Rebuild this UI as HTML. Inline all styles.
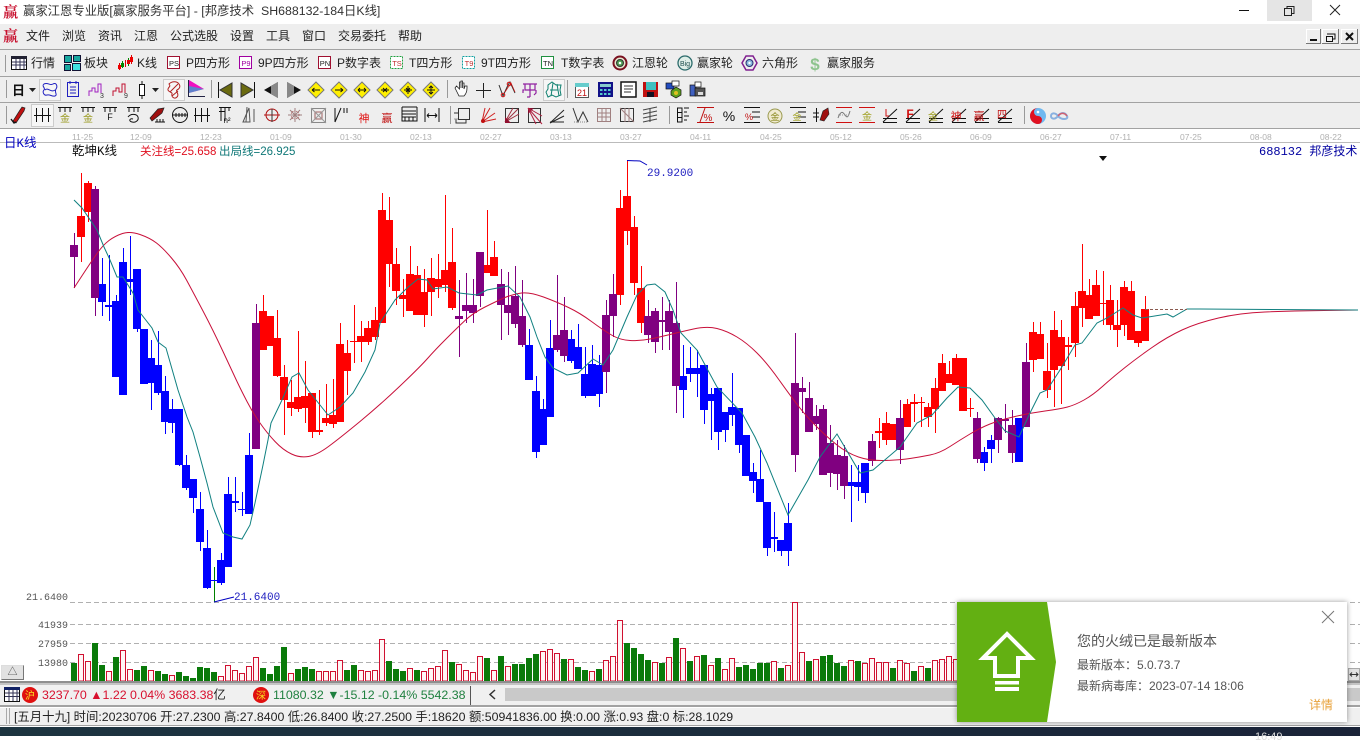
<!DOCTYPE html>
<html lang="zh"><head><meta charset="utf-8"><title>赢家江恩专业版</title>
<style>
html,body{margin:0;padding:0;background:#fff}
body{width:1360px;height:736px;position:relative;overflow:hidden;font:12px "Liberation Sans","Noto Sans CJK SC",sans-serif;color:#222}
.a{position:absolute;white-space:nowrap;line-height:14px}
.band{position:absolute;left:0;width:1360px;background:#eee}
.ln{position:absolute;left:0;width:1360px;height:1px;background:#a2a2a2}
svg{position:absolute;left:0;top:0}
svg text{font-family:"Liberation Sans","Noto Sans CJK SC",sans-serif}
svg text.m{font-family:"Liberation Mono","Noto Sans CJK SC",monospace}
#pop{position:absolute;left:957px;top:602px;width:390px;height:120px;background:#fff;box-shadow:0 0 5px rgba(0,0,0,.4)}
#pop .a{color:#555}
</style></head><body>

<!-- title bar -->
<div class="a" style="left:3px;top:3px;color:#c8102e;font:700 15px/18px 'Noto Serif CJK SC',serif">赢</div>
<div class="a" style="left:23px;top:4px;font-size:12.35px;color:#333">赢家江恩专业版[赢家服务平台] - [邦彦技术&nbsp;&nbsp;SH688132-184日K线]</div>
<div style="position:absolute;left:1267px;top:0;width:45px;height:21px;background:#e5e5e5"></div>

<!-- bars -->
<div class="band" style="top:24px;height:104px"></div>
<div class="ln" style="top:49px"></div>
<div class="ln" style="top:76px"></div>
<div class="ln" style="top:102px"></div>
<div class="ln" style="top:128px"></div>
<div class="ln" style="top:142px;background:#bbb"></div>

<!-- menu -->
<div class="a" style="left:3px;top:27px;color:#c8102e;font:700 15px/18px 'Noto Serif CJK SC',serif">赢</div>
<div class="a" style="left:26px;top:29px">文件</div>
<div class="a" style="left:62px;top:29px">浏览</div>
<div class="a" style="left:98px;top:29px">资讯</div>
<div class="a" style="left:134px;top:29px">江恩</div>
<div class="a" style="left:170px;top:29px">公式选股</div>
<div class="a" style="left:230px;top:29px">设置</div>
<div class="a" style="left:266px;top:29px">工具</div>
<div class="a" style="left:302px;top:29px">窗口</div>
<div class="a" style="left:338px;top:29px">交易委托</div>
<div class="a" style="left:398px;top:29px">帮助</div>

<!-- toolbar 1 labels -->
<div class="a" style="left:31px;top:56px">行情</div>
<div class="a" style="left:84px;top:56px">板块</div>
<div class="a" style="left:137px;top:56px">K线</div>
<div class="a" style="left:186px;top:56px">P四方形</div>
<div class="a" style="left:258px;top:56px">9P四方形</div>
<div class="a" style="left:337px;top:56px">P数字表</div>
<div class="a" style="left:409px;top:56px">T四方形</div>
<div class="a" style="left:481px;top:56px">9T四方形</div>
<div class="a" style="left:561px;top:56px">T数字表</div>
<div class="a" style="left:632px;top:56px">江恩轮</div>
<div class="a" style="left:697px;top:56px">赢家轮</div>
<div class="a" style="left:762px;top:56px">六角形</div>
<div class="a" style="left:827px;top:56px">赢家服务</div>

<!-- chart -->
<svg width="1360" height="736" viewBox="0 0 1360 736">
<!-- axis dates -->
<g font-size="8.5" fill="#b0b0b0">
<text x="72" y="140">11-25</text><text x="130" y="140">12-09</text><text x="200" y="140">12-23</text><text x="270" y="140">01-09</text><text x="340" y="140">01-30</text><text x="410" y="140">02-13</text><text x="480" y="140">02-27</text><text x="550" y="140">03-13</text><text x="620" y="140">03-27</text><text x="690" y="140">04-11</text><text x="760" y="140">04-25</text><text x="830" y="140">05-12</text><text x="900" y="140">05-26</text><text x="970" y="140">06-09</text><text x="1040" y="140">06-27</text><text x="1110" y="140">07-11</text><text x="1180" y="140">07-25</text><text x="1250" y="140">08-08</text><text x="1320" y="140">08-22</text>
</g>
<text class="m" x="4" y="147" font-size="12.5" fill="#0000c0">日K线</text>
<text class="m" x="72" y="155" font-size="12.5" fill="#111">乾坤K线</text>
<text x="140" y="155" font-size="11.5" fill="#e01020">关注线=25.658</text>
<text x="219" y="155" font-size="11.5" fill="#107878">出局线=26.925</text>
<text class="m" x="1259" y="155" font-size="12" fill="#0000a0">688132 邦彦技术</text>
<path d="M1099 156h8l-4 5z" fill="#111"/>

<!-- grid -->
<g stroke="#b0b0b0" stroke-dasharray="5 3" fill="none">
<path d="M70 602.500H1360M70 624.500H1360M70 643.500H1360M70 662.500H1360"/>
</g>
<g font-size="10" fill="#555">
<text class="m" x="26" y="600">21.6400</text>
<text class="m" x="38" y="628">41939</text>
<text class="m" x="38" y="647">27959</text>
<text class="m" x="38" y="666">13980</text>
</g>

<!-- candle wicks -->
<g fill="none" stroke-width="1">
<path stroke="#800080" d="M74.500 233V288M95.500 186V316M256.500 304V449M459.500 280V357M466.500 273V323M473.500 279V323M480.500 252V307M501.500 269V340M508.500 272V335M515.500 266V328M522.500 280V347M557.500 275V352M564.500 297V362M606.500 300V393M613.500 274V337M648.500 300V343M655.500 308V353M662.500 297V350M669.500 300V350M676.500 282V413M795.500 333V472M802.500 377V413M809.500 382V432M816.500 405V430M823.500 405V475M830.500 425V487M837.500 440V490M844.500 445V499M872.500 434V466M900.500 400V464M977.500 412V463M998.500 417V453M1005.500 404V433M1012.500 410V463M1026.500 343V427"/>
<path stroke="#ff0000" d="M81.500 173V262M88.500 181V222M263.500 295V350M277.500 310V377M284.500 365V435M291.500 380V416M298.500 331V412M305.500 361V423M312.500 393V438M319.500 390V435M326.500 384V426M333.500 379V428M340.500 323V422M347.500 340V395M354.500 305V363M361.500 321V362M368.500 321V345M375.500 307V340M382.500 193V323M389.500 197V287M396.500 248V305M403.500 279V317M410.500 246V311M417.500 266V315M424.500 269V327M431.500 258V316M438.500 254V298M445.500 195V292M452.500 228V310M487.500 210V273M494.500 241V276M620.500 190V305M627.500 160V245M634.500 216V295M641.500 266V333M879.500 418V448M886.500 412V445M907.500 399V427M914.500 394V422M921.500 397V427M928.500 403V427M935.500 378V433M942.500 354V391M949.500 361V383M956.500 354V385M970.500 398V417M1033.500 322V372M1040.500 322V359M1047.500 343V398M1054.500 311V407M1061.500 320V404M1068.500 337V370M1075.500 292V357M1082.500 244V327M1089.500 279V319M1096.500 270V316M1103.500 271V325M1110.500 285V330M1117.500 300V347M1124.500 281V336M1131.500 281V340M1138.500 331V347M1145.500 296V341"/>
<path stroke="#0000ff" d="M102.500 258V316M109.500 255V321M116.500 295V377M123.500 248V395M130.500 236V295M137.500 269V332M151.500 340V410M158.500 331V395M165.500 376V434M172.500 399V433M179.500 409V466M186.500 455V490M193.500 479V513M200.500 492V551M207.500 530V589M221.500 553V585M228.500 477V567M235.500 477V512M242.500 492V516M249.500 433V514M529.500 329V380M536.500 376V458M543.500 399V445M550.500 320V417M571.500 330V363M578.500 324V369M585.500 347V398M592.500 345V396M599.500 355V407M683.500 345V418M690.500 347V382M697.500 350V397M704.500 365V424M711.500 388V440M718.500 388V450M725.500 412V442M732.500 373V426M739.500 408V453M753.500 463V493M760.500 450V502M767.500 502V556M774.500 512V552M781.500 540V556M788.500 503V566M851.500 465V522M858.500 465V501M865.500 463V503M984.500 447V471M991.500 435V463"/>
<path stroke="#008000" d="M214.500 567V602"/>
</g>
<!-- candle bodies -->
<g fill="none" stroke-width="8">
<path stroke="#ff0000" d="M81 216V237M88 183V212M263 311V350M270 316V346M277 338V376M284 377V400M291 402V408M298 397V409M305 396V408M312 393V432M319 430V432M326 418V423M333 415V424M340 344V422M347 353V371M354 341V342M361 336V342M368 328V342M375 320V337M382 210V323M389 220V264M396 264V291M403 295V299M410 274V311M417 275V315M424 292V315M431 278V292M438 279V287M445 270V285M452 262V308M487 265V273M494 257V276M620 208V295M627 196V231M634 227V283M641 288V323M879 431V433M886 423V440M893 424V440M907 404V427M914 402V404M921 402V403M928 407V417M935 388V409M942 363V391M949 374V383M956 358V385M963 358V411M970 408V409M1033 332V360M1040 334V359M1047 371V390M1054 330V370M1061 337V366M1068 345V347M1075 306V343M1082 291V308M1089 295V319M1096 285V316M1103 303V304M1110 300V325M1117 325V330M1124 287V325M1131 291V340M1138 331V343M1145 309V341"/>
<path stroke="#0000ff" d="M102 284V302M109 305V307M116 301V377M123 262V395M130 279V282M137 269V329M144 329V384M151 358V383M158 365V393M165 391V422M172 409V423M179 409V465M186 465V488M193 479V498M200 509V542M207 548V588M214 580V581M221 560V583M228 494V567M235 501V503M242 509V510M249 455V514M529 345V380M536 391V452M543 409V445M550 348V417M571 339V361M578 347V369M585 374V396M592 364V396M599 365V394M683 376V390M690 368V374M697 368V374M704 365V410M711 394V401M718 388V432M725 412V430M732 407V415M739 408V445M746 435V476M753 472V481M760 479V502M767 502V548M774 537V539M781 540V551M788 523V551M851 482V486M858 482V487M865 463V493M984 452V463M991 440V449M1019 418V462"/>
<path stroke="#800080" d="M74 245V257M95 189V298M256 323V449M459 316V319M466 305V311M473 305V313M480 252V296M501 284V305M508 305V313M515 296V324M522 316V345M557 335V350M564 330V356M606 315V372M613 294V316M648 316V335M655 311V342M662 320V322M669 311V332M676 323V386M795 383V455M802 388V392M809 398V432M816 416V424M823 409V475M830 443V473M837 455V474M844 456V486M872 441V461M900 418V450M977 418V459M998 418V440M1005 419V421M1012 425V453M1026 362V427"/>
</g>

<!-- MA lines -->
<path fill="none" stroke="#c8103a" stroke-width="1" d="M74 288L82.500 275Q91 262 97 253.500Q103 245 109 240.500Q115 236 122.500 233.500Q130 231 140 234.500Q150 238 156.500 243Q163 248 171.500 258Q180 268 186.500 280Q193 292 203 311Q213 330 223 351.500Q233 373 237 381.500Q241 390 247 401.500Q253 413 260 423Q267 433 275 441.500Q283 450 291.500 454Q300 458 308.500 456.500Q317 455 328.500 446.500Q340 438 360 421.500Q380 405 400 386Q420 367 427.500 358.500Q435 350 446 339Q457 328 465 320.500Q473 313 485 307Q497 301 505 297.500Q513 294 521.500 293Q530 292 543.500 297Q557 302 568.500 307.500Q580 313 591.500 321.500Q603 330 611.500 335Q620 340 630 340.500Q640 341 650 339Q660 337 670 334.500Q680 332 693.500 329Q707 326 717 328.500Q727 331 737 337Q747 343 757 353Q767 363 779.500 380.500Q792 398 799.500 407.500Q807 417 817 427Q827 437 837 445Q847 453 858.500 457Q870 461 885 460.500Q900 460 910 458.500Q920 457 930 455Q940 453 950 446.500Q960 440 970 434Q980 428 990 424Q1000 420 1015 416.500Q1030 413 1045 411Q1060 409 1067.500 407Q1075 405 1084 400Q1093 395 1103 386Q1113 377 1125 367.500Q1137 358 1152 347.500Q1167 337 1182 330Q1197 323 1218.500 318Q1240 313 1265 312Q1290 311 1324 310.500L1358 310"/>
<polyline fill="none" stroke="#108080" stroke-width="1" points="74,200 82,208 97,230 104,247 110,260 117,277 123,277 133,293 138,310 152,328 158,342 166,348 178,390 187,417 193,432 200,457 207,483 213,507 223,533 233,537 242,539 250,525 255,503 263,465 268,440 271,423 282,400 292,377 299,373 308,390 320,405 328,415 340,407 353,393 365,372 375,350 380,323 395,300 407,288 418,279 427,280 433,289 447,287 459,293 477,295 487,290 508,286 520,297 530,317 537,337 545,357 553,368 567,375 578,373 593,359 603,365 613,350 627,317 637,295 647,285 655,284 665,292 673,310 681,333 697,350 717,387 742,413 755,437 767,463 788,515 808,480 820,457 837,434 860,473 873,470 900,447 917,423 932,415 947,398 958,387 970,388 982,400 995,418 1005,431 1019,437 1030,413 1040,393 1047,390 1060,370 1075,345 1082,343 1097,323 1107,318 1123,308 1133,315 1142,318 1167,314 1173,317 1187,309 1200,309 1358,310"/>
<path d="M1145 309.500H1187" stroke="#8a5a50" stroke-dasharray="3 2" fill="none"/>

<!-- high/low annotations -->
<path d="M627 160.500L640 161L647 165" stroke="#0000c0" fill="none"/>
<path d="M214 602L234 597" stroke="#0000c0" fill="none"/>
<text class="m" x="647" y="176" font-size="11" fill="#2020c0">29.9200</text>
<text class="m" x="234" y="600" font-size="11" fill="#2020c0">21.6400</text>

<!-- volume -->
<path fill="none" stroke="#0a7a0a" stroke-width="6" d="M74 663V681M95 643V681M102 665V681M116 657V681M137 670V681M144 666V681M158 671V681M165 674V681M179 672V681M186 676V681M193 678V681M200 667V681M207 668V681M214 672V681M263 668V681M270 674V681M277 666V681M284 647V681M298 669V681M305 667V681M312 669V681M347 670V681M354 665V681M389 661V681M396 669V681M403 671V681M417 670V681M452 662V681M487 658V681M501 656V681M515 664V681M522 664V681M529 658V681M536 654V681M564 659V681M578 667V681M585 670V681M599 669V681M627 643V681M634 648V681M641 654V681M648 660V681M662 663V681M676 638V681M690 661V681M704 655V681M718 658V681M739 667V681M746 665V681M753 669V681M760 663V681M767 663V681M781 668V681M809 661V681M823 656V681M830 655V681M837 663V681M844 666V681M858 661V681M893 668V681M914 671V681M928 668V681"/>
<path fill="#fff6f6" stroke="#d01030" stroke-width="1" d="M78.500 654.500h5V681h-5zM85.500 661.500h5V681h-5zM106.500 671.500h5V681h-5zM120.500 650.500h5V681h-5zM127.500 669.500h5V681h-5zM148.500 670.500h5V681h-5zM169.500 675.500h5V681h-5zM218.500 676.500h5V681h-5zM225.500 665.500h5V681h-5zM232.500 670.500h5V681h-5zM239.500 673.500h5V681h-5zM246.500 666.500h5V681h-5zM253.500 657.500h5V681h-5zM288.500 673.500h5V681h-5zM316.500 671.500h5V681h-5zM323.500 671.500h5V681h-5zM330.500 671.500h5V681h-5zM337.500 660.500h5V681h-5zM358.500 670.500h5V681h-5zM365.500 671.500h5V681h-5zM372.500 670.500h5V681h-5zM379.500 639.500h5V681h-5zM407.500 668.500h5V681h-5zM421.500 671.500h5V681h-5zM428.500 668.500h5V681h-5zM435.500 666.500h5V681h-5zM442.500 650.500h5V681h-5zM456.500 664.500h5V681h-5zM463.500 670.500h5V681h-5zM470.500 672.500h5V681h-5zM477.500 656.500h5V681h-5zM491.500 670.500h5V681h-5zM505.500 666.500h5V681h-5zM540.500 651.500h5V681h-5zM547.500 649.500h5V681h-5zM554.500 653.500h5V681h-5zM568.500 659.500h5V681h-5zM589.500 671.500h5V681h-5zM603.500 660.500h5V681h-5zM610.500 656.500h5V681h-5zM617.500 620.500h5V681h-5zM652.500 662.500h5V681h-5zM666.500 657.500h5V681h-5zM680.500 648.500h5V681h-5zM694.500 656.500h5V681h-5zM708.500 665.500h5V681h-5zM722.500 669.500h5V681h-5zM729.500 658.500h5V681h-5zM771.500 661.500h5V681h-5zM785.500 665.500h5V681h-5zM792.500 602.500h5V681h-5zM799.500 652.500h5V681h-5zM813.500 659.500h5V681h-5zM848.500 660.500h5V681h-5zM862.500 663.500h5V681h-5zM869.500 658.500h5V681h-5zM876.500 662.500h5V681h-5zM883.500 662.500h5V681h-5zM897.500 660.500h5V681h-5zM904.500 663.500h5V681h-5zM918.500 666.500h5V681h-5zM932.500 660.500h5V681h-5zM939.500 659.500h5V681h-5zM946.500 656.500h5V681h-5zM953.500 659.500h5V681h-5z"/>
</svg>

<!-- lower UI -->
<div style="position:absolute;left:1px;top:665px;width:23px;height:15px;background:#e2e2e2;border:1px solid #ddd;border-right-color:#777;border-bottom-color:#777;box-sizing:border-box;text-align:center;font:10px/13px 'Liberation Sans','Noto Sans CJK SC',sans-serif;color:#444">△</div>
<div style="position:absolute;left:1348px;top:668px;width:12px;height:13px;background:#e2e2e2;border:1px solid #aaa;box-sizing:border-box"></div>
<div style="position:absolute;left:0;top:681px;width:1360px;height:2px;background:#8e8e8e"></div>
<div style="position:absolute;left:0;top:683px;width:1360px;height:2px;background:#c4c4c4"></div>
<div class="band" style="top:685px;height:20px;background:#f0f0f0"></div>
<div style="position:absolute;left:470px;top:686px;width:35px;height:19px;background:#f0f0f0;border-left:1px solid #555"></div>
<div style="position:absolute;left:505px;top:688px;width:855px;height:13px;background:#c9c9c9"></div>
<div class="ln" style="top:705px;height:2px;background:#a2a2a2"></div>
<div class="band" style="top:707px;height:19px;background:#f0f0f0;border-top:1px solid #fff"></div>
<div class="ln" style="top:725px;background:#a2a2a2"></div>
<div class="ln" style="top:726px;background:#fff"></div>
<div style="position:absolute;left:0;top:727px;width:1360px;height:9px;background:linear-gradient(90deg,#1d3440,#1b2c3c 50%,#1a2338)"></div>
<div class="a" style="left:1255px;top:730px;color:#ddd;font-size:11px">16:49</div>

<div class="a" style="left:42px;top:688px;width:428px;overflow:hidden;font-size:12.4px;color:#d8102e">3237.70 ▲1.22 0.04% 3683.38<span style="color:#222">亿</span><span style="position:absolute;left:231px;top:0;color:#208040">11080.32 ▼-15.12 -0.14% 5542.38</span></div>
<div class="a" style="left:14px;top:710px;font-size:12.35px;color:#222">[五月十九] 时间:20230706 开:27.2300 高:27.8400 低:26.8400 收:27.2500 手:18620 额:50941836.00 换:0.00 涨:0.93 盘:0 标:28.1029</div>

<!-- toolbar icons -->
<svg width="1360" height="736" viewBox="0 0 1360 736">
<!-- window controls -->
<path d="M1239 10.500h10" stroke="#111"/>
<path d="M1284.500 8.500h7v7h-7zM1287 8V6.500h7v7h-2.500" fill="none" stroke="#222"/>
<path d="M1330 5l10 10M1340 5l-10 10" stroke="#222" fill="none"/>
<!-- MDI buttons -->
<g fill="#eee"><rect x="1306" y="29" width="15" height="15"/><rect x="1322" y="29" width="17" height="15"/><rect x="1341" y="29" width="17" height="15"/></g>
<path d="M1306.500 44V29.500H1321M1322.500 44V29.500H1339M1341.500 44V29.500H1358" stroke="#fff" fill="none"/>
<path d="M1320.500 29V43.500H1306M1338.500 29V43.500H1322M1357.500 29V43.500H1341" stroke="#777" fill="none"/>
<path d="M1310 40h7" stroke="#111" stroke-width="2"/>
<path d="M1327 34h8v5h-2M1326.500 36.500h6v5h-6z" fill="none" stroke="#111"/>
<path d="M1346 33l7 7M1353 33l-7 7" stroke="#111" stroke-width="2"/>
<!-- separators -->
<g stroke="#999" fill="none"><path d="M5.500 55V72M6.500 80V98M6.500 106V124M211.500 80V98M447.500 80V98M567.500 80V98M450.500 106V124M669.500 106V124M1024.500 106V124"/></g>

<!-- toolbar 1 icons -->
<rect x="11.500" y="56.500" width="15" height="13" fill="#fff" stroke="#111"/><rect x="11" y="56" width="16" height="3" fill="#223"/><path d="M12 62h14M12 65h14M16 59v10M20 59v10M24 59v10" stroke="#335" fill="none"/>
<g fill="#18a8a0" stroke="#113"><rect x="64.500" y="55.500" width="7" height="7"/><rect x="73.500" y="55.500" width="7" height="6"/><rect x="64.500" y="64.500" width="6" height="6"/><rect x="72.500" y="63.500" width="8" height="7" fill="#40e0e0"/></g>
<path d="M119.500 63v7M125.500 60v7M131.500 55v9" stroke="#d00" fill="none"/><g fill="#e00"><rect x="118" y="65" width="3" height="4"/><rect x="130" y="57" width="3" height="5"/></g><path d="M122.500 61v7M128.500 58v8" stroke="#080" fill="none"/><rect x="121" y="63" width="3" height="4" fill="#080"/><rect x="127" y="60" width="3" height="4" fill="#d00"/>
<g fill="#fff" stroke-width="1">
<rect x="167.500" y="56.500" width="12" height="12" stroke="#a01030"/><rect x="239.500" y="56.500" width="12" height="12" stroke="#a000a0"/><rect x="318.500" y="56.500" width="12" height="12" stroke="#a01030"/><rect x="390.500" y="56.500" width="12" height="12" stroke="#20a040" stroke-dasharray="2 1"/><rect x="462.500" y="56.500" width="12" height="12" stroke="#10a0a0" stroke-dasharray="2 1"/><rect x="541.500" y="56.500" width="12" height="12" stroke="#209040"/>
</g>
<g font-size="7.500" text-anchor="middle">
<text x="174" y="66" fill="#222">PS</text><text x="246" y="66" fill="#a000a0">P9</text><text x="325" y="66" fill="#222">PN</text><text x="397" y="66" fill="#c03030">TS</text><text x="469" y="66" fill="#c03030">T9</text><text x="548" y="66" fill="#222">TN</text>
</g>
<circle cx="620" cy="63" r="6.500" fill="#e8e8d0" stroke="#7a1020" stroke-width="2"/><circle cx="620" cy="63" r="3.500" fill="#4a9a50" stroke="#333"/><circle cx="620" cy="63" r="1.300" fill="#fff"/>
<circle cx="685" cy="63" r="7" fill="#dfeee8" stroke="#2a6a6a" stroke-width="1.300"/><text x="685" y="66" font-size="7" text-anchor="middle" fill="#205050">Big</text>
<path d="M746 56h7l4 7-4 7h-7l-4-7z" fill="#eee" stroke="#802090" stroke-width="1.500"/><circle cx="749.500" cy="63" r="3.500" fill="#88bbdd" stroke="#2a2a70"/><circle cx="749.500" cy="63" r="1.200" fill="#fff"/>
<text x="815" y="70" font-size="17" font-weight="700" text-anchor="middle" fill="#8ec48e">$</text>

<!-- toolbar 2 -->
<text x="12" y="95" font-size="13" font-weight="700" fill="#111">日</text>
<path d="M29 88h7l-3.500 4zM152 88h7l-3.500 4z" fill="#222"/>
<g fill="#f6f6f6" stroke="#ccc"><rect x="39.500" y="79.500" width="21" height="21"/><rect x="163.500" y="79.500" width="21" height="21"/><rect x="543.500" y="79.500" width="21" height="21"/></g>
<path d="M44 84c4-2 6 2 9 0s5 2 3 5 2 6-1 7-5-2-8-1-5-3-3-5-3-4 0-6zM45 90c3-3 6 3 10 0" fill="none" stroke="#2020c0"/>
<path d="M67.500 82.500h11v14h-11zM70 87h6M70 90h6M70 93h6M70 81v3M76 81v3" fill="none" stroke="#2020c0"/>
<path d="M89 96v-5h3v-3h3v4h3v-8h3v9" fill="none" stroke="#a020c0"/><text x="100" y="98" font-size="7" fill="#333">3</text>
<path d="M113 96v-5h3v-3h3v4h3v-8h3v9" fill="none" stroke="#c01030"/><text x="124" y="98" font-size="7" fill="#333">9</text>
<rect x="139.500" y="84.500" width="5" height="11" fill="#fff" stroke="#111"/><path d="M142 81v3M142 96v3" stroke="#111"/>
<path d="M169 84c3-3 8-3 10 0s0 5-2 6 3 4 0 7-6-1-5-3-5-2-4-5 3-2 1-5zM170 92l8-8M172 96l6-5" fill="none" stroke="#b02020"/>
<path d="M189 80l15 9-15 4z" fill="#f010c0"/><path d="M189 86l15 3-15 4z" fill="#20b0d0" opacity=".7"/><path d="M188.500 80v17M188 96.500h17" stroke="#224"/>
<g fill="#6a6a10" stroke="#333"><path d="M232 83v14l-12-7z"/><path d="M241 83v14l12-7z"/></g><path d="M218.500 82v16M254.500 82v16" stroke="#111" fill="none"/>
<path d="M264 90l14-8v16z" fill="#111"/><path d="M271 86l7-4v16l-7-4z" fill="#888"/>
<path d="M301 90l-14-8v16z" fill="#111"/><path d="M294 86l-7-4v16l7-4z" fill="#888"/>
<g fill="#fff000" stroke="#777"><path d="M316 82l8 8-8 8-8-8z"/><path d="M339 82l8 8-8 8-8-8z"/><path d="M362 82l8 8-8 8-8-8z"/><path d="M385 82l8 8-8 8-8-8z"/><path d="M408 82l8 8-8 8-8-8z"/><path d="M431 82l8 8-8 8-8-8z"/></g>
<g fill="none" stroke="#111"><path d="M312 90h8M312 90l2.500-2M312 90l2.500 2M335 90h8M343 90l-2.500-2M343 90l-2.500 2M358 90h8M358 90l2-2M358 90l2 2M366 90l-2-2M366 90l-2 2M381 90h8M383 88l2 2-2 2M387 88l-2 2 2 2M404 90h8M408 86v8M406 88l4 4M410 88l-4 4M427 90h8M431 86v8M429 88l2-2 2 2M429 92l2 2 2-2"/></g>
<path d="M455 88l2 4 2 4h5c2-2 3-5 3-8v-2l-2 0-1 3v-6h-1.500v5-7h-1.500v7-6h-1.500v7l-3-3z" fill="#fff" stroke="#222" stroke-width=".8"/>
<path d="M483.500 83v15M476 90.500h15" stroke="#222"/>
<path d="M499 85l4 11 5-11 2-3 5 11" fill="none" stroke="#333"/><circle cx="503" cy="95" r="1.800" fill="none" stroke="#d01010"/><circle cx="509" cy="84" r="1.800" fill="none" stroke="#d01010"/><path d="M505 92l6-9 4 9" fill="none" stroke="#d01010" stroke-width=".7"/>
<path d="M523 84h14M525 84v6h10v-6M530 84v13M524 90h-1v3M536 90v3l-2 2M527 97h3" fill="none" stroke="#9020a0" stroke-width="1.200"/>
<path d="M548 85l4-3 4 3 5 0-1 5 1 5-5 2-4-2-4 2-2-5 2-3zM550 90h8M553 83l-2 13M557 84l2 12" fill="none" stroke="#108070"/>
<rect x="575.500" y="83.500" width="13" height="14" fill="#fff" stroke="#555"/><rect x="575" y="83" width="14" height="4" fill="#66cccc"/><text x="582" y="96" font-size="9" text-anchor="middle" fill="#c01010">21</text>
<rect x="598" y="82" width="15" height="15" fill="#118" /><rect x="600" y="84" width="11" height="3" fill="#8cc"/><g fill="#5cc"><rect x="600" y="89" width="2.500" height="2"/><rect x="604" y="89" width="2.500" height="2"/><rect x="608" y="89" width="2.500" height="2"/><rect x="600" y="93" width="2.500" height="2"/><rect x="604" y="93" width="2.500" height="2"/><rect x="608" y="93" width="2.500" height="2"/></g>
<rect x="621" y="82" width="15" height="15" fill="#fff" stroke="#111" stroke-width="1.500"/><path d="M624 86h9M624 89h9M624 92h7" stroke="#333" fill="none"/>
<rect x="643" y="82" width="15" height="15" fill="#c01010"/><rect x="646" y="82" width="10" height="8" fill="#40c0c0"/><rect x="647" y="92" width="7" height="5" fill="#112"/>
<rect x="666" y="83" width="8" height="6" fill="#224cc0" stroke="#111" stroke-width=".7"/><rect x="672" y="81" width="7" height="5" fill="#fff" stroke="#111" stroke-width=".7"/><path d="M671 91l5-4 5 3v5l-5 3-5-3z" fill="#60a020" stroke="#111" stroke-width=".7"/><circle cx="676" cy="93" r="2" fill="#e0c020"/>
<rect x="690" y="85" width="6" height="11" fill="#4060c0" stroke="#111" stroke-width=".7"/><rect x="695" y="82" width="6" height="5" fill="#fff" stroke="#111" stroke-width=".7"/><rect x="695" y="88" width="10" height="8" fill="#555" stroke="#111" stroke-width=".7"/><rect x="698" y="92" width="5" height="3" fill="#ddd"/>

<!-- toolbar 3 -->
<path d="M13 121l3 2 8-12 1-3-3-1-2 3z" fill="#c01010" stroke="#222" stroke-width=".7"/><path d="M11 119l3 4 2-1" fill="none" stroke="#111" stroke-width="1.300"/>
<rect x="31.500" y="104.500" width="22" height="22" fill="#f6f6f6" stroke="#ccc"/>
<g fill="none" stroke="#111">
<path d="M36.500 108v14M42.500 108v14M48.500 108v14M34 115.500h17"/>
<path d="M58 107.500h14M60 107v5M65 107v5M70 107v5M81 107.500h14M83 107v5M88 107v5M93 107v5M103 107.500h14M105 107v5M110 107v5M115 107v5M127 107.500h13M129 107v5M134 107v5M138 107v5"/>
<path d="M128 117c3-4 9-3 10 0s-2 6-6 5-2-4 1-3"/>
<path d="M155 122h10M157 122v-3M160 122v-3M163 122v-3"/>
<circle cx="180" cy="115" r="7.500"/><path d="M173 115h14M176 113v4M179 113v4M182 113v4M185 113v4"/>
<path d="M195.500 108v14M201.500 108v14M207.500 108v14M194 115.500h16"/>
<path d="M219 107.500h12M221 107v4M225 107v4M229 107v4M219 111.500h6M221 111v10M225 111v10"/>
<path d="M243 122l6-14 1 14zM247 107l-1 15M254 109v13" stroke="#555"/>
<path d="M341 108l-6 14M335 108v14M344 108v5M347 108v5"/>
<path d="M402 107v14h15v-14M402 107h15M402 111h14M402 114h14M402 117h14M405 117v4M409 117v4M413 117v4"/>
<path d="M425 108v14M439 108v14M427 115.500h10M427 115.500l2-2M427 115.500l2 2M437 115.500l-2-2M437 115.500l-2 2"/>
</g>
<g font-size="10" text-anchor="middle"><text x="65" y="122" fill="#9a9a20">金</text><text x="88" y="122" fill="#9a9a20">金</text><text x="110" y="120" fill="#111" font-size="9">F</text><text x="227" y="123" font-size="8" fill="#111">n²</text><text x="364" y="122" font-size="11" fill="#e01010">神</text><text x="387" y="122" font-size="11" fill="#c01010">赢</text></g>
<path d="M150 118l2 3 10-8 2-5-6 1z" fill="#a01010" stroke="#222" stroke-width=".7"/>
<circle cx="272" cy="115" r="6" fill="none" stroke="#b01010"/><path d="M264 115h16" stroke="#b01010"/><path d="M272 109v13" stroke="#333"/>
<circle cx="295" cy="115" r="4" fill="none" stroke="#b05050" stroke-dasharray="1 1"/><path d="M288 115h14M295 108v14M290 110l10 10M300 110l-10 10" stroke="#a08080" fill="none"/>
<rect x="311.500" y="108.500" width="14" height="14" fill="none" stroke="#888"/><rect x="315" y="112" width="7" height="7" fill="none" stroke="#a06060"/><path d="M311 108l15 15M326 108l-15 15" stroke="#999"/>
<path d="M458.500 108.500h11v11h-11zM454 113h4M456 119v4h10v-4" fill="none" stroke="#333"/><path d="M454 119h4" stroke="#999"/>
<path d="M482 122l8-14M482 122l13-9M482 122l3-14" stroke="#d02020" fill="none"/><path d="M482 122l14-3" stroke="#d02020" fill="none"/><circle cx="483" cy="121" r="2" fill="#c01010"/>
<rect x="505.500" y="108.500" width="13" height="14" fill="none" stroke="#333"/><path d="M505 122l13-13M505 122l8-14M505 122l14-8" stroke="#a03040" fill="none"/><path d="M505 123v-6l6 6z" fill="#901030"/>
<rect x="528.500" y="108.500" width="12" height="14" fill="none" stroke="#333"/><path d="M528 108v6l6-6z" fill="#801030"/><path d="M528 108l14 16M528 108l8 16M528 108l14 8" stroke="#b02040" fill="none"/>
<path d="M550 123l14-13M550 123l14-7M550 122h14" fill="none" stroke="#222"/><path d="M573 108l5 14 5-10 5 10" fill="none" stroke="#333"/><path d="M574 122h14" stroke="#888" stroke-dasharray="1 1"/>
<g fill="none" stroke="#a08080"><rect x="597.500" y="108.500" width="13" height="13"/><path d="M602 108v14M606 108v14M597 113h14M597 117h14"/></g>
<g fill="none" stroke="#333"><rect x="620.500" y="108.500" width="13" height="13"/><path d="M620 108l14 14M625 108v14M629 108v14" stroke="#a08080"/></g>
<path d="M643 110l14-3M643 114l14-3M643 118l14-3M643 122l14-3M650 108v14" fill="none" stroke="#444"/>
<path d="M677.500 108v14M677 108h5v14h-5M677 112.500h5M677 117.500h5M684 108h5M684 112h3M684 116h5M684 120h3" fill="none" stroke="#111"/>
<path d="M697 107.500h17M697 122.500h17M700 122l5-14" stroke="#c01010" fill="none"/><text x="708" y="121" font-size="10" text-anchor="middle" fill="#c01010">%</text>
<text x="729" y="121" font-size="14" text-anchor="middle" fill="#111">%</text>
<path d="M744 107.500h16M744 122.500h16M752 112h8M752 117h8" stroke="#111" fill="none"/><text x="749" y="120" font-size="9" text-anchor="middle" fill="#c01010">%</text>
<circle cx="775" cy="116" r="7" fill="#f0ead0" stroke="#9a9a50"/><text x="775" y="120" font-size="9" text-anchor="middle" fill="#8a8a20">金</text>
<path d="M790 107.500h16M790 122.500h16M798 112h8M798 117h8" stroke="#111" fill="none"/><text x="797" y="120" font-size="9" text-anchor="middle" fill="#a0a020">金</text>
<path d="M816.500 108v14M813 113h6M813 117h6" stroke="#111" fill="none"/><path d="M820 120l3-9 5-3 1 6-5 7z" fill="#a01010" stroke="#222" stroke-width=".6"/>
<path d="M836 107.500h16M836 122.500h16" stroke="#d01010" fill="none"/><path d="M838 118c3-8 5-6 7-3s3 3 5-4" stroke="#777" fill="none"/><path d="M838 115h12" stroke="#999" stroke-dasharray="1 1"/>
<path d="M859 107.500h16M859 122.500h16" stroke="#d01010" fill="none"/><text x="867" y="120" font-size="10" text-anchor="middle" fill="#a0a020">金</text>
<path d="M883 122.500h14M897 109l-14 13M883 118.500h14" stroke="#111" fill="none"/><path d="M886 109v7h3" stroke="#d01010" fill="none"/>
<g stroke="#111" fill="none"><path d="M906 122.500h14M920 109l-14 13M906 118.500h14M929 122.500h14M943 109l-14 13M929 118.500h14M952 122.500h14M966 109l-14 13M952 118.500h14M975 122.500h14M989 109l-14 13M975 118.500h14M998 122.500h14M1012 109l-14 13M998 118.500h14"/></g>
<text x="910" y="118" font-size="12" font-weight="700" fill="#d01010" text-anchor="middle">F</text>
<text x="933" y="120" font-size="10" fill="#a0a020" text-anchor="middle">金</text>
<text x="956" y="120" font-size="11" fill="#d01010" text-anchor="middle">神</text>
<text x="979" y="120" font-size="11" fill="#c01010" text-anchor="middle">赢</text>
<text x="1002" y="118" font-size="10" fill="#c01010" text-anchor="middle">四</text>
<circle cx="1038" cy="116" r="8" fill="#70b8f0"/><path d="M1038 108a8 8 0 0 0 0 16 4 4 0 0 0 0-8 4 4 0 0 1 0-8z" fill="#e01020"/><circle cx="1038" cy="112" r="1.300" fill="#fff"/><circle cx="1038" cy="120" r="1.300" fill="#e01020"/>
<path d="M1058 116c-3-4-7-3-7 0s4 4 7 0 7-4 9 0-6 4-9 0z" fill="none" stroke="#88b0e0" stroke-width="2"/><path d="M1058 116c3-4 7-3 9 0" fill="none" stroke="#d06070" stroke-width="1.500"/>

<!-- index row icons -->
<rect x="4.500" y="687.500" width="15" height="14" fill="#fff" stroke="#111"/><rect x="4" y="687" width="16" height="3" fill="#112266"/><path d="M5 693h14M5 696.500h14M9 690v11M13 690v11M17 690v11" stroke="#335" fill="none"/>
<circle cx="30" cy="695" r="8" fill="#e01010"/><text x="30" y="699" font-size="10" text-anchor="middle" fill="#f8e020">沪</text>
<circle cx="261" cy="695" r="8" fill="#e01010"/><text x="261" y="699" font-size="10" text-anchor="middle" fill="#f8e020">深</text>
<path d="M495 690l-5 4.500 5 4.500" fill="none" stroke="#333" stroke-width="1.500"/>
<path d="M1350 674.500h8M1352 672.500l-2 2 2 2M1356 672.500l2 2-2 2" stroke="#333" fill="none"/>
<path d="M6.500 708v16M9.500 708v16" stroke="#aaa" fill="none"/>
</svg>

<!-- popup -->
<div id="pop">
<svg width="110" height="120" viewBox="0 0 110 120">
<path d="M0 0H90L99 60L90 120H0z" fill="#63b012"/>
<path d="M50 32L26 56H38V74H61V56H74z" fill="none" stroke="#fff" stroke-width="4" stroke-linejoin="miter"/>
<rect x="38" y="79" width="24" height="3.500" fill="#fff"/><rect x="38" y="85" width="24" height="4" fill="#fff"/>
</svg>
<div class="a" style="left:120px;top:31px;font-size:14px;line-height:16px">您的火绒已是最新版本</div>
<div class="a" style="left:120px;top:56px;font-size:12px">最新版本：5.0.73.7</div>
<div class="a" style="left:120px;top:77px;font-size:12px">最新病毒库：2023-07-14 18:06</div>
<div class="a" style="left:352px;top:96px;font-size:12px;color:#e8a33c">详情</div>
<svg style="left:364px;top:8px" width="14" height="14" viewBox="0 0 14 14"><path d="M1 1l12 12M13 1L1 13" stroke="#777" fill="none"/></svg>
</div>
</body></html>
